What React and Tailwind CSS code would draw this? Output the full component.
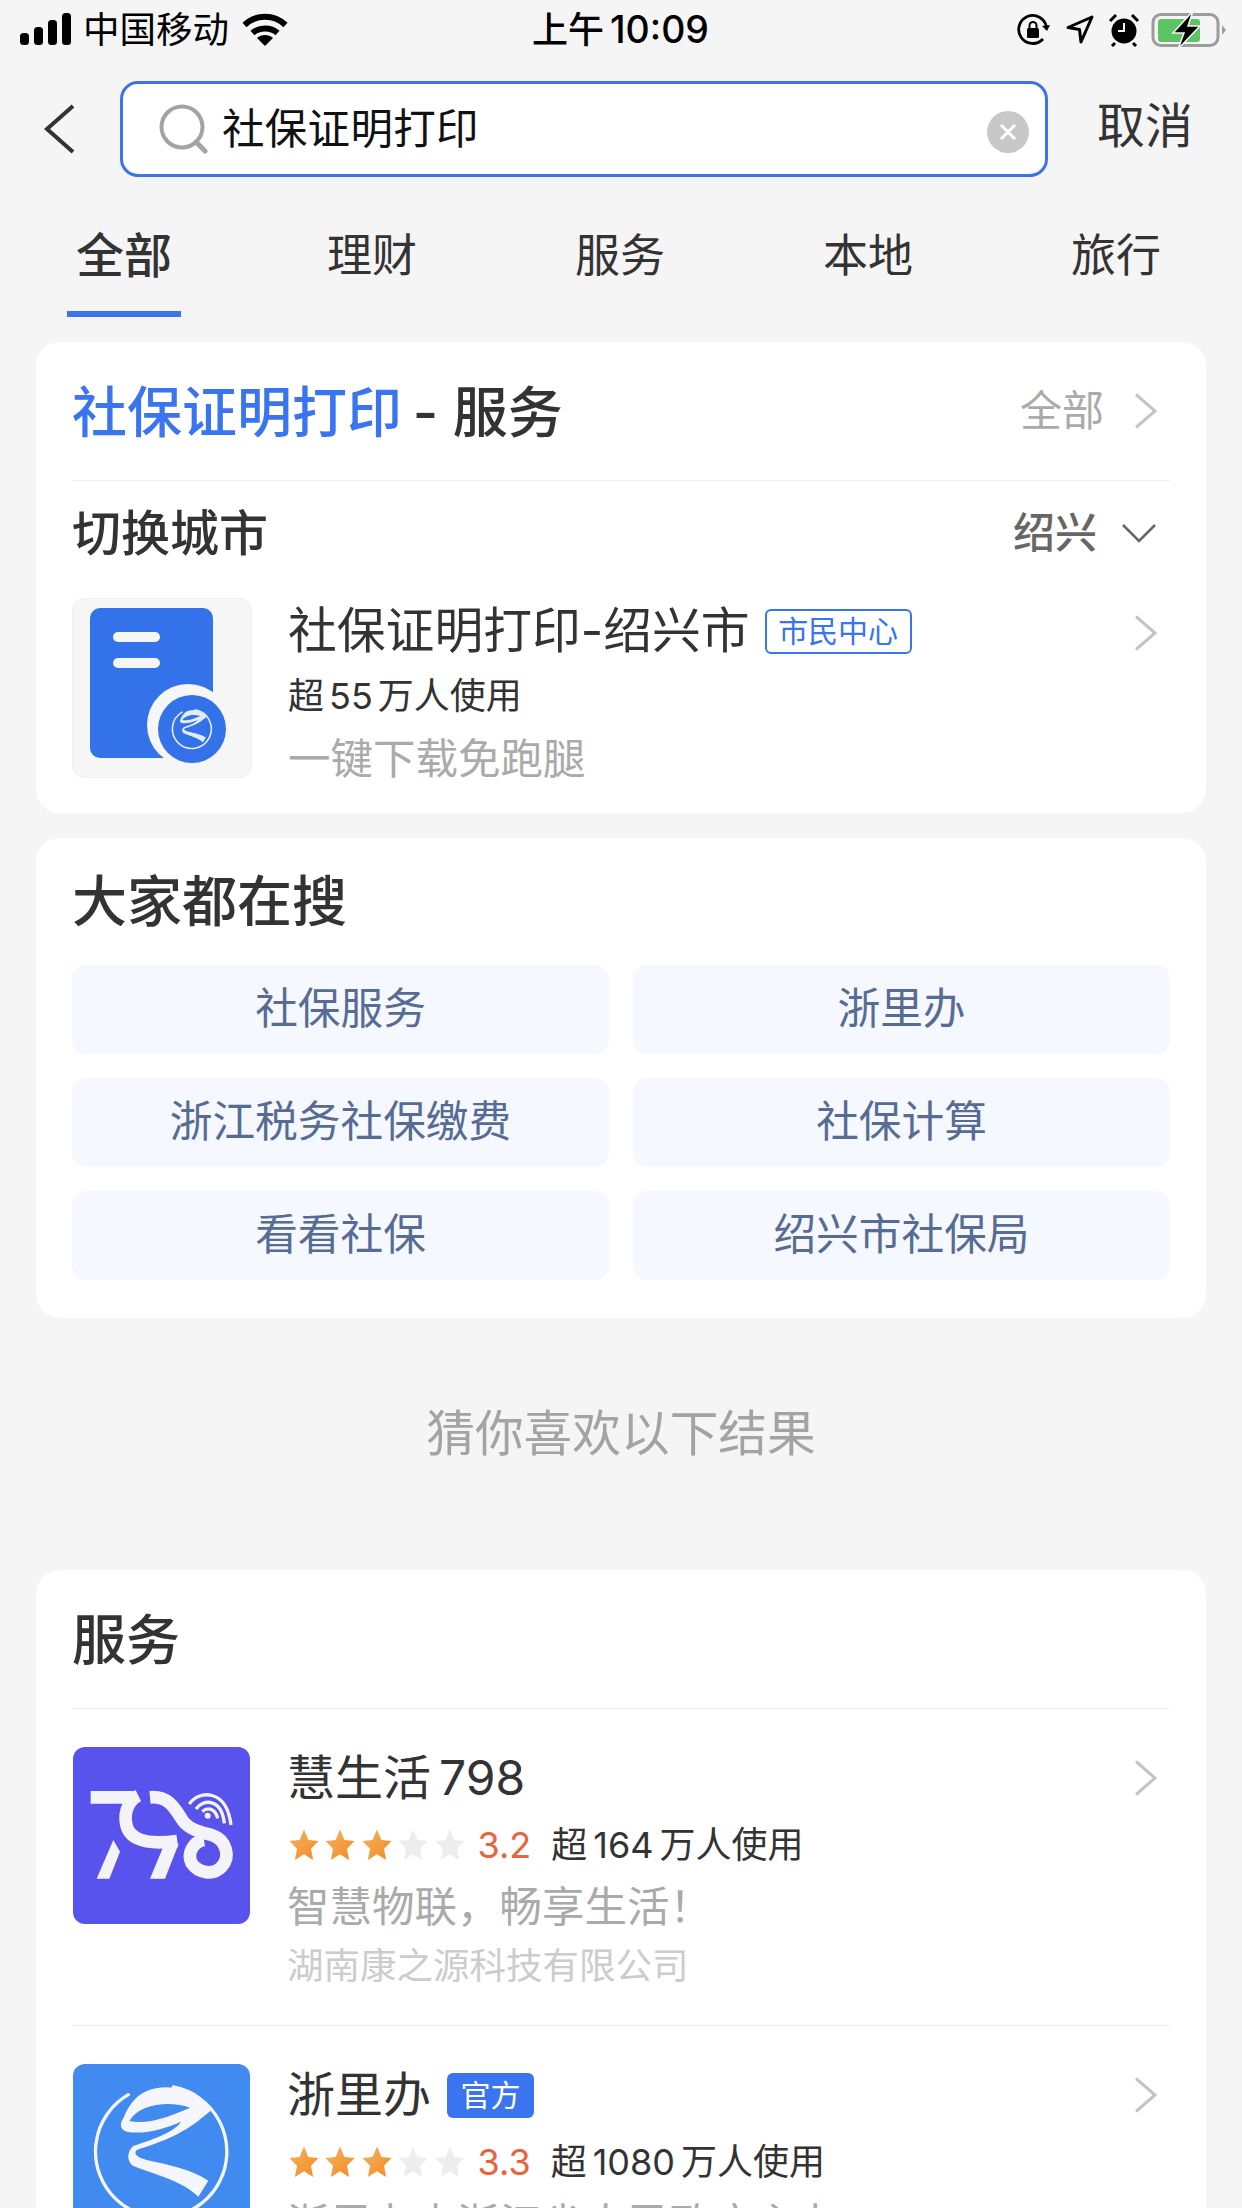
const FONT = { fontFamily: '"Inter","Noto Sans CJK SC",sans-serif' };

const Chevron = ({ className = "" }) => (
  <svg viewBox="0 0 24 36" className={className} fill="none" stroke="#c4c4c4" strokeWidth="3">
    <path d="M2 1.5 L21 18 L2 34.5" />
  </svg>
);

const Star = ({ on, id }) => (
  <svg viewBox="0 0 30 30" preserveAspectRatio="none" className="w-[30px] h-[32px] shrink-0">
    <defs>
      <linearGradient id={id} x1="0" y1="0" x2="1" y2="1">
        <stop offset="0" stopColor="#f6b25f" />
        <stop offset="1" stopColor="#f28a26" />
      </linearGradient>
    </defs>
    <path
      d="M15 0.5 L19.4 10.2 L29.6 11.3 L22 18.5 L24.1 29 L15 23.7 L5.9 29 L8 18.5 L0.4 11.3 L10.6 10.2 Z"
      fill={on ? `url(#${id})` : "#ededed"}
    />
  </svg>
);

const Stars = ({ prefix }) => (
  <div className="flex gap-[6.4px] ml-[2px]">
    {[0, 1, 2, 3, 4].map((i) => (
      <Star key={i} on={i < 3} id={`${prefix}${i}`} />
    ))}
  </div>
);

/* Zhejiang mark, drawn in a 550-unit space: ring of radius 197 around (275,275) */
const ZheMark = ({ color = "#f4f6fb", ring = 10 }) => (
  <g>
    <path d="M175 104 A197 197 0 1 0 310 81" fill="none" stroke={color} strokeWidth={ring} strokeLinecap="round" />
    <path
      fillRule="evenodd"
      fill={color}
      d="M205 108 C250 72 345 62 425 150 L398 172 C360 205 300 240 205 268 C190 275 192 290 230 300 C300 315 370 330 415 362 L385 410 C340 365 260 345 190 318 C170 305 170 275 190 258 C240 240 310 220 333 185 C290 205 220 225 170 215 C150 210 148 190 160 175 C170 150 185 125 205 108 Z M360 143 C300 122 210 130 178 183 C230 195 300 170 360 143 Z"
    />
  </g>
);

const StatusBar = () => (
  <div className="h-[60px] flex items-center justify-between relative text-black">
    <div className="flex items-center pl-[20px]">
      <svg width="52" height="34" viewBox="0 0 52 34" fill="#000">
        <rect x="0" y="20" width="9" height="12" rx="3.5" />
        <rect x="14" y="14" width="9" height="18" rx="3.5" />
        <rect x="28" y="7" width="9" height="25" rx="3.5" />
        <rect x="42" y="0" width="9" height="32" rx="3.5" />
      </svg>
      <span className="text-[36.5px] leading-none ml-[11px]">中国移动</span>
      <svg width="46" height="34" viewBox="0 0 46 34" className="ml-[13px]" fill="none" stroke="#000" strokeWidth="6">
        <path d="M2.5 12 C14 1 32 1 43.5 12" />
        <path d="M10.5 20 C17 14 29 14 35.5 20" />
        <path d="M23 33 L15 25 C19 21 27 21 31 25 Z" fill="#000" stroke="none" />
      </svg>
    </div>
    <div className="absolute left-[532px] top-[10px] text-[36px] leading-[40px] font-medium">
      上午<span className="ml-[6px] text-[37.5px]">10:09</span>
    </div>
    <div className="flex items-center pr-[15px]">
      <svg width="34" height="34" viewBox="0 0 34 34" fill="none" stroke="#000" strokeWidth="2.8">
        <path d="M27 26 A14 14 0 1 1 30.5 14" />
        <path d="M26 13 L31 18 L34 12" fill="#000" stroke="none" />
        <rect x="11" y="15" width="12" height="10" rx="1.5" fill="#000" stroke="none" />
        <path d="M13.5 15 V12.5 A3.5 3.5 0 0 1 20.5 12.5 V15" strokeWidth="2" />
      </svg>
      <svg width="28" height="30" viewBox="0 0 28 30" className="ml-[16px]" fill="none" stroke="#000" strokeWidth="3" strokeLinejoin="round">
        <path d="M26 2 L15 27 L13.5 14.5 L2 12.5 Z" />
      </svg>
      <svg width="30" height="34" viewBox="0 0 30 34" className="ml-[15px]">
        <circle cx="15" cy="18" r="12.5" fill="#000" />
        <path d="M15 10 V18 H9" stroke="#f5f5f5" strokeWidth="2" fill="none" />
        <path d="M1 8 L7 2 M29 8 L23 2 M6 30 L3 33 M24 30 L27 33" stroke="#000" strokeWidth="3" />
      </svg>
      <svg width="76" height="38" viewBox="0 0 76 38" className="ml-[12px]">
        <rect x="2" y="3.5" width="65" height="31" rx="8" fill="none" stroke="#9c9c9c" strokeWidth="3" />
        <rect x="7" y="8" width="42" height="23" rx="3" fill="#5ec463" />
        <path d="M71 14 L75 19 L71 24 Z" fill="#9c9c9c" />
        <path d="M42 0 L22 22 L33 22 L27 38 L49 15 L37 15 Z" fill="#000" stroke="#f5f5f5" strokeWidth="1.5" />
      </svg>
    </div>
  </div>
);

const SearchRow = () => (
  <div className="flex items-center h-[96px] mt-[21px]">
    <svg width="34" height="50" viewBox="0 0 34 50" className="ml-[42px]" fill="none" stroke="#333" strokeWidth="4">
      <path d="M31 2 L5 25 L31 48" />
    </svg>
    <div className="ml-[44px] w-[928px] h-[96px] rounded-[18px] border-[3px] border-[#3a74e8] bg-white flex items-center pl-[36px] pr-[16px]">
      <svg width="50" height="50" viewBox="0 0 50 50" fill="none" stroke="#a3a3a3" strokeWidth="4" className="shrink-0">
        <circle cx="23" cy="23" r="20.5" />
        <path d="M37 38 L46 47" strokeWidth="5" strokeLinecap="round" />
      </svg>
      <span className="ml-[13px] text-[42.5px] leading-none text-[#111] tracking-[0.3px]">社保证明打印</span>
      <div className="ml-auto mt-[6px] w-[42px] h-[42px] rounded-full bg-[#c8c8c8] flex items-center justify-center">
        <svg width="18" height="18" viewBox="0 0 18 18" stroke="#fff" strokeWidth="3">
          <path d="M2 2 L16 16 M16 2 L2 16" />
        </svg>
      </div>
    </div>
    <span className="ml-[49px] mb-[6px] text-[48px] leading-none text-[#333]">取消</span>
  </div>
);

const Tabs = () => (
  <div className="mt-[49px] h-[95px] flex text-[#333] text-[45px] leading-[60px] text-center">
    <div className="w-[248px] relative">
      <span className="font-medium text-[48px]">全部</span>
      <div className="absolute left-[67px] top-[85px] w-[114px] h-[6px] bg-[#3a74ee]" />
    </div>
    <div className="w-[248px]">理财</div>
    <div className="w-[248px]">服务</div>
    <div className="w-[248px]">本地</div>
    <div className="w-[248px]">旅行</div>
  </div>
);

const Card = ({ className = "", children }) => (
  <div className={`mx-[36px] bg-white rounded-[24px] px-[36px] ${className}`}>{children}</div>
);

const DocIcon = () => (
  <div className="w-[180px] h-[180px] rounded-[12px] bg-[#f6f6f7] border border-[#efefef] shrink-0 relative">
    <div className="absolute left-[17px] top-[9px] w-[123px] h-[150px] rounded-[10px] bg-[#3472ea]">
      <div className="absolute left-[23px] top-[24px] w-[47px] h-[10px] rounded-full bg-[#f6f6f7]" />
      <div className="absolute left-[23px] top-[50px] w-[47px] h-[10px] rounded-full bg-[#f6f6f7]" />
    </div>
    <div className="absolute left-[74px] top-[85px] w-[82px] h-[82px] rounded-full bg-[#f6f6f7]">
      <svg viewBox="0 0 100 100" className="absolute left-[11px] top-[11px] w-[68px] h-[68px]">
        <circle cx="50" cy="50" r="50" fill="#3472ea" />
        <g transform="translate(10 10) scale(.1455)">
          <ZheMark color="#e3ecfc" ring={16} />
        </g>
      </svg>
    </div>
  </div>
);

const FirstCard = () => (
  <Card className="mt-[21px] h-[471px]">
    <div className="h-[139px] flex items-center justify-between border-b border-[#eeeeee]">
      <div className="text-[55px] leading-none font-medium text-[#333] mt-[3px]">
        <span className="text-[#3a74ee]">社保证明打印</span> <span className="-ml-[4px]">- 服务</span>
      </div>
      <div className="flex items-center text-[42px] leading-none text-[#aaaaaa]">
        全部
        <Chevron className="w-[24px] h-[36px] ml-[30px] mr-[12px]" />
      </div>
    </div>
    <div className="h-[104px] flex items-center justify-between">
      <span className="text-[49px] leading-none font-medium text-[#333]">切换城市</span>
      <div className="flex items-center text-[42px] leading-none text-[#666] font-medium">
        绍兴
        <svg width="34" height="20" viewBox="0 0 34 20" className="ml-[25px] mr-[14px]" fill="none" stroke="#666" strokeWidth="2.5">
          <path d="M1 2 L17 18 L33 2" />
        </svg>
      </div>
    </div>
    <div className="flex mt-[13px]">
      <DocIcon />
      <div className="ml-[36px] flex-1">
        <div className="flex items-center h-[66px]">
          <span className="text-[48.8px] leading-none text-[#333]">社保证明打印-绍兴市</span>
          <span className="ml-[15px] w-[147px] h-[45px] rounded-[6px] border-2 border-[#3a74ee] text-[#3a74ee] text-[30px] leading-none flex items-center justify-center">
            市民中心
          </span>
          <Chevron className="w-[24px] h-[40px] ml-auto mr-[12px] mt-[4px]" />
        </div>
        <div className="text-[36px] leading-[44px] mt-[10px] text-[#333]">
          超<span className="mx-[5px]">55</span>万人使用
        </div>
        <div className="text-[42.5px] leading-[50px] mt-[16px] text-[#aaaaaa]">一键下载免跑腿</div>
      </div>
    </div>
  </Card>
);

const Chip = ({ children }) => (
  <div className="h-[89px] rounded-[14px] bg-[#f5f8fe] flex items-center justify-center text-[42.7px] leading-none text-[#566c94]">
    {children}
  </div>
);

const SearchCard = () => (
  <Card className="mt-[25px] h-[480px]">
    <div className="pt-[33px] text-[55px] leading-[60px] font-medium text-[#333]">大家都在搜</div>
    <div className="mt-[34px] grid grid-cols-2 gap-x-[24px] gap-y-[24px]">
      <Chip>社保服务</Chip>
      <Chip>浙里办</Chip>
      <Chip>浙江税务社保缴费</Chip>
      <Chip>社保计算</Chip>
      <Chip>看看社保</Chip>
      <Chip>绍兴市社保局</Chip>
    </div>
  </Card>
);

const Logo798 = () => (
  <div className="w-[177px] h-[177px] rounded-[12px] bg-[#5853ec] shrink-0 overflow-hidden">
    <svg viewBox="9 6 531 531" className="w-full h-full" fill="none" stroke="#f4f4f8" strokeWidth="38">
      <path d="M62 157 H195" />
      <path d="M205 152 C168 170 160 215 172 250 C190 292 250 298 322 288" />
      <path d="M240 157 C295 152 315 190 335 222 C355 255 395 262 425 270 C470 285 482 335 455 365 C430 392 385 385 365 355 C350 325 370 290 402 285" />
      <polygon points="282,300 326,296 285,401 240,401" fill="#f4f4f8" stroke="none" />
      <polygon points="130,285 150,320 118,401 80,401" fill="#f4f4f8" stroke="none" />
      <g strokeWidth="10">
        <path d="M358 177 C385 135 470 130 483 240" />
        <path d="M378 192 C400 160 455 160 463 235" />
        <path d="M397 200 C412 185 436 190 443 220" />
      </g>
      <circle cx="413" cy="212" r="9" fill="#f4f4f8" stroke="none" />
    </svg>
  </div>
);

const LogoZheli = () => (
  <div className="w-[177px] h-[177px] rounded-[12px] bg-[#418aef] shrink-0 overflow-hidden">
    <svg viewBox="9 12 531 531" className="w-full h-full">
      <ZheMark />
    </svg>
  </div>
);

const Tag = () => (
  <span className="ml-[16px] w-[87px] h-[45px] rounded-[6px] bg-[#3a74ee] text-white text-[30px] leading-none flex items-center justify-center">
    官方
  </span>
);

const ServiceItem = ({ logo, name, tag, rate, users, desc, company, prefix, divider }) => (
  <div className={`flex pt-[38px] h-[317px] ${divider ? "border-b border-[#eeeeee]" : ""}`}>
    <div className="ml-[1px]">{logo}</div>
    <div className="ml-[37px] flex-1">
      <div className="flex items-center h-[62px]">
        <span className="text-[48px] leading-none text-[#333]">{name}</span>
        {tag}
        <Chevron className="w-[24px] h-[40px] ml-auto mr-[12px]" />
      </div>
      <div className="flex items-center h-[44px] mt-[14px]">
        <Stars prefix={prefix} />
        <span className="ml-[13px] text-[36px] leading-none text-[#e8643a]">{rate}</span>
        <span className="ml-[20px] text-[36px] leading-none text-[#333]">
          超<span className="mx-[6px]">{users}</span>万人使用
        </span>
      </div>
      <div className="text-[42.5px] leading-[52px] mt-[14px] text-[#aaaaaa]">{desc}</div>
      <div className="text-[36.5px] leading-[44px] mt-[11px] text-[#cccccc]">{company}</div>
    </div>
  </div>
);

const Services = () => (
  <Card className="h-[900px]">
    <div className="h-[139px] flex items-center border-b border-[#eeeeee] text-[54px] leading-none font-medium text-[#333]">
      <span className="mt-[3px]">服务</span>
    </div>
    <ServiceItem
      logo={<Logo798 />}
      name={
        <>
          慧生活<span className="ml-[8px]">798</span>
        </>
      }
      rate="3.2"
      users="164"
      desc="智慧物联，畅享生活！"
      company="湖南康之源科技有限公司"
      prefix="a"
      divider
    />
    <ServiceItem
      logo={<LogoZheli />}
      name="浙里办"
      tag={<Tag />}
      rate="3.3"
      users="1080"
      desc="浙里办由浙江省人民政府主办"
      company="浙江省大数据发展管理局"
      prefix="b"
    />
  </Card>
);

export default function App() {
  return (
    <div className="w-[1242px] h-[2208px] overflow-hidden bg-[#f5f5f5]" style={FONT}>
      <StatusBar />
      <SearchRow />
      <Tabs />
      <FirstCard />
      <SearchCard />
      <div className="h-[252px] flex items-center justify-center text-[48.7px] leading-none text-[#a3a3a3] pb-[20px]">
        猜你喜欢以下结果
      </div>
      <Services />
    </div>
  );
}
